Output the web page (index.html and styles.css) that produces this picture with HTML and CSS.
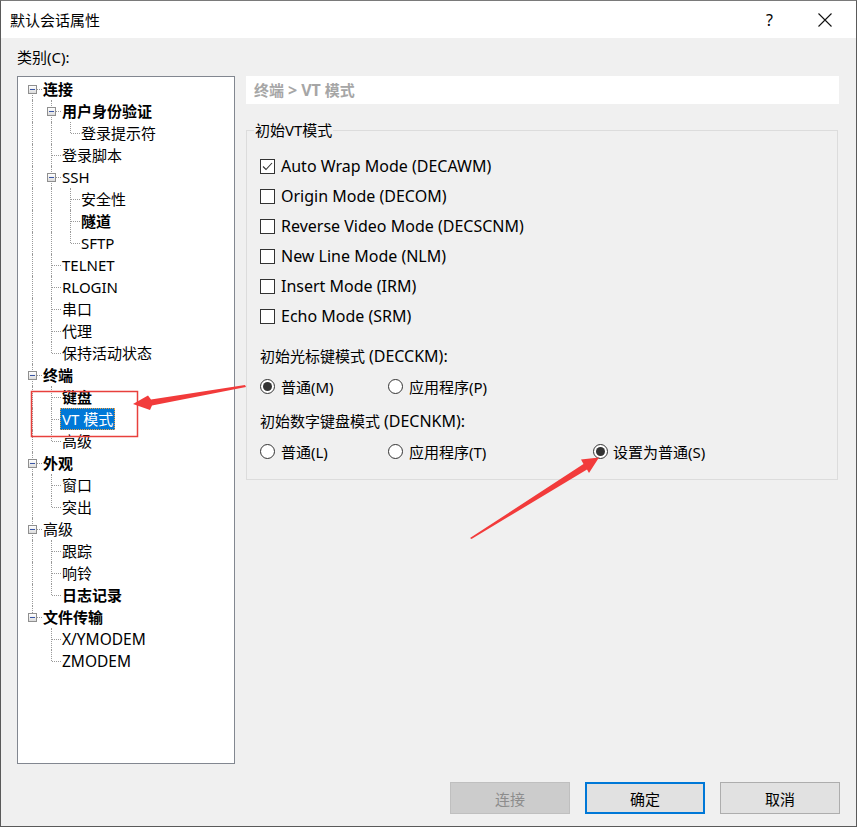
FILE: index.html
```html
<!DOCTYPE html>
<html lang="zh-CN">
<head>
<meta charset="utf-8">
<title>默认会话属性</title>
<link rel="stylesheet" href="styles.css">
</head>
<body>
<div class="window">
  <div class="titlebar">
    <span class="title">默认会话属性</span>
    <span class="help">?</span>
    <span class="close"><svg width="16" height="16" viewBox="0 0 16 16"><path d="M1.5 1.5 L14.5 14.5 M14.5 1.5 L1.5 14.5" stroke="#111" stroke-width="1.1" fill="none"/></svg></span>
  </div>
  <div class="body">
    <div class="cat-label">类别(C):</div>
    <div class="main">
      <div class="tree">
        <div class="row"><span class="c f"><i class="x"></i></span><span class="lbl b">连接</span></div>
        <div class="row"><span class="c v"></span><span class="c t"><i class="x"></i></span><span class="lbl b">用户身份验证</span></div>
        <div class="row"><span class="c v"></span><span class="c v"></span><span class="c l"></span><span class="lbl">登录提示符</span></div>
        <div class="row"><span class="c v"></span><span class="c t"></span><span class="lbl">登录脚本</span></div>
        <div class="row"><span class="c v"></span><span class="c t"><i class="x"></i></span><span class="lbl">SSH</span></div>
        <div class="row"><span class="c v"></span><span class="c v"></span><span class="c t"></span><span class="lbl">安全性</span></div>
        <div class="row"><span class="c v"></span><span class="c v"></span><span class="c t"></span><span class="lbl b">隧道</span></div>
        <div class="row"><span class="c v"></span><span class="c v"></span><span class="c l"></span><span class="lbl">SFTP</span></div>
        <div class="row"><span class="c v"></span><span class="c t"></span><span class="lbl">TELNET</span></div>
        <div class="row"><span class="c v"></span><span class="c t"></span><span class="lbl">RLOGIN</span></div>
        <div class="row"><span class="c v"></span><span class="c t"></span><span class="lbl">串口</span></div>
        <div class="row"><span class="c v"></span><span class="c t"></span><span class="lbl">代理</span></div>
        <div class="row"><span class="c v"></span><span class="c l"></span><span class="lbl">保持活动状态</span></div>
        <div class="row"><span class="c t"><i class="x"></i></span><span class="lbl b">终端</span></div>
        <div class="row"><span class="c v"></span><span class="c t"></span><span class="lbl b">键盘</span></div>
        <div class="row"><span class="c v"></span><span class="c t"></span><span class="lbl sel">VT 模式</span></div>
        <div class="row"><span class="c v"></span><span class="c l"></span><span class="lbl">高级</span></div>
        <div class="row"><span class="c t"><i class="x"></i></span><span class="lbl b">外观</span></div>
        <div class="row"><span class="c v"></span><span class="c t"></span><span class="lbl">窗口</span></div>
        <div class="row"><span class="c v"></span><span class="c l"></span><span class="lbl">突出</span></div>
        <div class="row"><span class="c t"><i class="x"></i></span><span class="lbl">高级</span></div>
        <div class="row"><span class="c v"></span><span class="c t"></span><span class="lbl">跟踪</span></div>
        <div class="row"><span class="c v"></span><span class="c t"></span><span class="lbl">响铃</span></div>
        <div class="row"><span class="c v"></span><span class="c l"></span><span class="lbl b">日志记录</span></div>
        <div class="row"><span class="c l"><i class="x"></i></span><span class="lbl b">文件传输</span></div>
        <div class="row"><span class="c"></span><span class="c t"></span><span class="lbl en">X/YMODEM</span></div>
        <div class="row"><span class="c"></span><span class="c l"></span><span class="lbl en">ZMODEM</span></div>
      </div>
      <div class="panel">
        <div class="crumb">终端 <span class="en">&gt; VT</span> 模式</div>
        <fieldset class="group">
          <legend>初始VT模式</legend>
          <div class="inner">
            <div class="opt ck"><span class="check"><svg width="13" height="13" viewBox="0 0 13 13"><path d="M2 6.5 L5 9.5 L11 3" stroke="#333" stroke-width="1.1" fill="none"/></svg></span>Auto Wrap Mode (DECAWM)</div>
            <div class="opt ck"><span class="check"></span>Origin Mode (DECOM)</div>
            <div class="opt ck"><span class="check"></span>Reverse Video Mode (DECSCNM)</div>
            <div class="opt ck"><span class="check"></span>New Line Mode (NLM)</div>
            <div class="opt ck"><span class="check"></span>Insert Mode (IRM)</div>
            <div class="opt ck"><span class="check"></span>Echo Mode (SRM)</div>
            <div class="sub first">初始光标键模式 <span class="en">(DECCKM):</span></div>
            <div class="radios">
              <div class="opt"><span class="radio on"></span>普通(M)</div>
              <div class="opt"><span class="radio"></span>应用程序(P)</div>
            </div>
            <div class="sub">初始数字键盘模式 <span class="en">(DECNKM):</span></div>
            <div class="radios">
              <div class="opt"><span class="radio"></span>普通(L)</div>
              <div class="opt"><span class="radio"></span>应用程序(T)</div>
              <div class="opt"><span class="radio on"></span>设置为普通(S)</div>
            </div>
          </div>
        </fieldset>
      </div>
    </div>
    <div class="buttons">
      <button class="btn disabled">连接</button>
      <button class="btn default">确定</button>
      <button class="btn">取消</button>
    </div>
  </div>
  <svg class="annot" width="857" height="827" viewBox="0 0 857 827">
    <rect x="31.5" y="391.5" width="106" height="45" fill="none" stroke="#e8403c" stroke-width="1.5"/>
    <polygon points="245,385 151,399.5 148,395.5 133,404 150,410 152,405.5 246,387" fill="#f23b3b"/>
    <polygon points="470,538 583.5,464 581,459.5 599,457.5 589,473 587,469.5 471.5,539" fill="#f23b3b"/>
  </svg>
</div>
</body>
</html>
```
FILE: styles.css
```css
html, body {
  margin: 0;
  padding: 0;
  background: #f0f0f0;
}
body {
  font-family: "Noto Sans", "Noto Sans CJK SC", sans-serif;
  font-size: 15px;
  color: #000;
}
.window {
  position: relative;
  width: 857px;
  height: 827px;
  box-sizing: border-box;
  border: 1px solid #5a5a5a;
  border-top-color: #7a7a7a;
  background: #f0f0f0;
  display: flex;
  flex-direction: column;
}
.titlebar {
  height: 37px;
  background: #fff;
  display: flex;
  align-items: center;
  padding-left: 9px;
  flex: none;
}
.title {
  line-height: 20px;
}
.help {
  margin-left: auto;
  line-height: 20px;
  font-size: 16px;
}
.close {
  width: 16px;
  height: 16px;
  margin-left: 44px;
  margin-right: 23px;
  display: flex;
}
.body {
  flex: 1;
  display: flex;
  flex-direction: column;
  padding: 0 17px 0 16px;
}
.cat-label {
  padding: 9px 0 9px 0;
  line-height: 20px;
}
.main {
  display: flex;
  gap: 11px;
  height: 688px;
}
.tree {
  width: 218px;
  height: 688px;
  box-sizing: border-box;
  background: #fff;
  border: 1px solid #828790;
  padding: 1px 0 0 5px;
  flex: none;
}
.row {
  display: flex;
  height: 22px;
  line-height: 22px;
  white-space: nowrap;
}
.c {
  width: 19px;
  height: 22px;
  flex: none;
  position: relative;
}
.c.v::before, .c.t::before, .c.l::before, .c.f::before {
  content: "";
  position: absolute;
  left: 9px;
  top: 0;
  bottom: 0;
  border-left: 1px dotted #9a9a9a;
}
.c.l::before { bottom: 11px; }
.c.f::before { top: 11px; }
.c.t::after, .c.l::after, .c.f::after {
  content: "";
  position: absolute;
  left: 10px;
  top: 11px;
  width: 9px;
  border-top: 1px dotted #9a9a9a;
}
.x {
  position: absolute;
  left: 5px;
  top: 7px;
  width: 9px;
  height: 9px;
  box-sizing: border-box;
  border: 1px solid #8f8f8f;
  background: linear-gradient(#ffffff, #dcdcdc);
  z-index: 1;
}
.x::after {
  content: "";
  position: absolute;
  left: 1px;
  top: 3px;
  width: 5px;
  height: 1px;
  background: #3a56a5;
}
.lbl {
  margin-left: -1px;
  padding: 0 2px;
}
.lbl.en {
  font-size: 15.5px;
}
.lbl.b {
  font-weight: bold;
}
.lbl.sel {
  background: #0078d7;
  color: #fff;
  outline: 1px dotted #f0a040;
  outline-offset: -1px;
}
.panel {
  width: 593px;
  display: flex;
  flex-direction: column;
}
.crumb {
  height: 28px;
  background: #fff;
  line-height: 28px;
  padding-left: 8px;
  color: #a6a6a6;
  font-weight: bold;
}
.crumb .en {
  font-size: 16px;
}
.group {
  margin: 16px 1px 0 0;
  padding: 0 0 13px 8px;
  border: 1px solid #dcdcdc;
  min-width: 0;
}
.group legend {
  padding: 0 1px;
  margin-left: -1px;
  line-height: 20px;
}
.inner {
  margin: 11px 0 0 5px;
}
.opt {
  display: flex;
  align-items: center;
  height: 30px;
  white-space: nowrap;
}
.opt.ck {
  font-size: 16px;
}
.check {
  width: 15px;
  height: 15px;
  box-sizing: border-box;
  border: 1px solid #333;
  background: #fff;
  margin-right: 6px;
  display: flex;
  align-items: center;
  justify-content: center;
  flex: none;
}
.radio {
  width: 15px;
  height: 15px;
  box-sizing: border-box;
  border: 1px solid #333;
  border-radius: 50%;
  background: #fff;
  margin-right: 6px;
  position: relative;
  flex: none;
}
.radio.on::after {
  content: "";
  position: absolute;
  left: 2px;
  top: 2px;
  width: 9px;
  height: 9px;
  border-radius: 50%;
  background: #333;
}
.radios .opt:nth-child(3) .radio {
  margin-right: 5px;
}
.sub {
  height: 30px;
  line-height: 30px;
  margin-top: 5px;
}
.sub .en {
  font-size: 16px;
}
.sub.first {
  margin-top: 10px;
}
.radios {
  display: grid;
  grid-template-columns: 128px 205px auto;
}
.buttons {
  display: flex;
  justify-content: flex-end;
  gap: 15px;
  margin-top: 18px;
  margin-right: -1px;
}
.btn {
  width: 120px;
  height: 32px;
  box-sizing: border-box;
  font-family: "Noto Sans", "Noto Sans CJK SC", sans-serif;
  font-size: 15px;
  background: #e1e1e1;
  border: 1px solid #adadad;
  color: #000;
  padding: 0;
}
.btn.disabled {
  background: #cccccc;
  border-color: #bfbfbf;
  color: #8c8c8c;
}
.btn.default {
  border: 2px solid #0078d7;
}
.annot {
  position: absolute;
  left: -1px;
  top: -1px;
  pointer-events: none;
}
```
